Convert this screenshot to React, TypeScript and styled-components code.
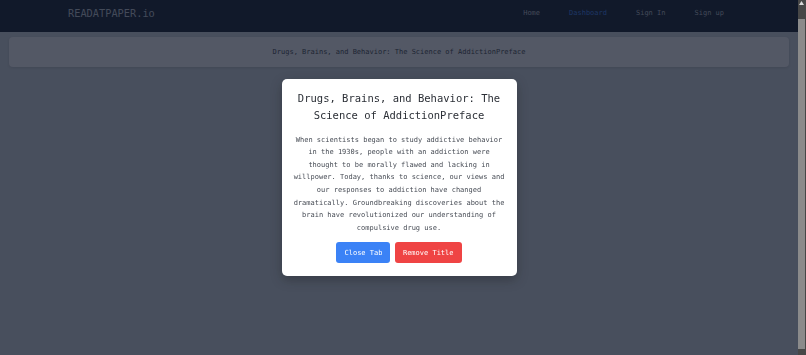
import styled, { createGlobalStyle } from "styled-components";

const GlobalStyle = createGlobalStyle`
  html, body {
    margin: 0;
    padding: 0;
    overflow: hidden;
  }
  body {
    font-family: "DejaVu Sans Mono", "Liberation Mono", monospace;
    background-color: #9ca3af;
  }
`;

const Shell = styled.div`
  display: flex;
  min-height: 100vh;
`;

const Page = styled.div`
  flex: 1;
  min-width: 0;
`;

// fake browser scrollbar, as seen in the screenshot
const ScrollRail = styled.div`
  width: 8px;
  background-color: #474747;
  display: flex;
  flex-direction: column;
  padding: 0 1px 6px 0;
  box-sizing: border-box;
`;

const ScrollArrow = styled.div`
  height: 19px;
  display: flex;
  justify-content: center;
  padding-top: 1px;
  box-sizing: border-box;
`;

const ScrollThumb = styled.div`
  flex: 1;
  background-color: #8b8b8b;
`;

const Navbar = styled.nav`
  background-color: #131d31;
  padding: 6px 0 12px;
`;

const NavInner = styled.div`
  max-width: 656px;
  margin: 0 auto;
  padding-right: 6px;
  display: flex;
  align-items: center;
  justify-content: space-between;
  line-height: 14px;
`;

const Logo = styled.div`
  font-size: 10.3px;
  color: #8f96a5;
`;

const NavLinks = styled.div`
  display: flex;
  gap: 29px;
`;

const NavLink = styled.a<{ $active?: boolean }>`
  font-size: 7px;
  text-decoration: none;
  color: ${(p) => (p.$active ? "#2f63c0" : "#8e94a2")};
`;

const Main = styled.main`
  padding: 5px 9px;
`;

const TitleCard = styled.div`
  height: 30px;
  border-radius: 4px;
  background-color: #b7b8c3;
  box-shadow: 0 1px 3px rgba(0, 0, 0, 0.12);
  display: flex;
  align-items: center;
  justify-content: center;
  font-size: 7px;
  color: #323846;
`;

const Overlay = styled.div`
  position: fixed;
  top: 0;
  left: 0;
  bottom: 0;
  right: 8px;
  background-color: rgba(17, 24, 39, 0.6);
  display: flex;
  align-items: center;
  justify-content: center;
`;

const Modal = styled.div`
  width: 235px;
  box-sizing: border-box;
  background-color: #ffffff;
  border-radius: 5px;
  box-shadow: 0 4px 12px rgba(0, 0, 0, 0.25);
  padding: 11.5px 11.5px 13px;
  text-align: center;
`;

const ModalTitle = styled.h2`
  margin: 0 0 10px;
  font-size: 10.5px;
  font-weight: normal;
  line-height: 16.8px;
  color: #2b2f36;
`;

const ModalText = styled.p`
  margin: 0 0 8px;
  font-size: 7px;
  line-height: 12.6px;
  color: #464b54;
`;

const Actions = styled.div`
  display: flex;
  justify-content: center;
  gap: 4.5px;
`;

const Button = styled.button<{ $variant: "primary" | "danger" }>`
  font-family: inherit;
  font-size: 7px;
  height: 21px;
  padding: 0 8px;
  border: none;
  border-radius: 3px;
  color: #ffffff;
  background-color: ${(p) => (p.$variant === "primary" ? "#3b82f6" : "#ef4444")};
  cursor: pointer;
`;

const title = "Drugs, Brains, and Behavior: The Science of AddictionPreface";

export default function App() {
  return (
    <>
      <GlobalStyle />
      <Shell>
        <Page>
          <Navbar>
            <NavInner>
              <Logo>READATPAPER.io</Logo>
              <NavLinks>
                <NavLink href="#">Home</NavLink>
                <NavLink href="#" $active>
                  Dashboard
                </NavLink>
                <NavLink href="#">Sign In</NavLink>
                <NavLink href="#">Sign up</NavLink>
              </NavLinks>
            </NavInner>
          </Navbar>
          <Main>
            <TitleCard>{title}</TitleCard>
          </Main>
          <Overlay>
            <Modal>
              <ModalTitle>{title}</ModalTitle>
              <ModalText>
                When scientists began to study addictive behavior in the 1930s,
                people with an addiction were thought to be morally flawed and
                lacking in willpower. Today, thanks to science, our views and
                our responses to addiction have changed dramatically.
                Groundbreaking discoveries about the brain have revolutionized
                our understanding of compulsive drug use.
              </ModalText>
              <Actions>
                <Button $variant="primary">Close Tab</Button>
                <Button $variant="danger">Remove Title</Button>
              </Actions>
            </Modal>
          </Overlay>
        </Page>
        <ScrollRail>
          <ScrollArrow>
            <svg width="5" height="4" viewBox="0 0 5 4">
              <path d="M2.5 0 L5 4 L0 4 Z" fill="#d8d8d8" />
            </svg>
          </ScrollArrow>
          <ScrollThumb />
        </ScrollRail>
      </Shell>
    </>
  );
}
